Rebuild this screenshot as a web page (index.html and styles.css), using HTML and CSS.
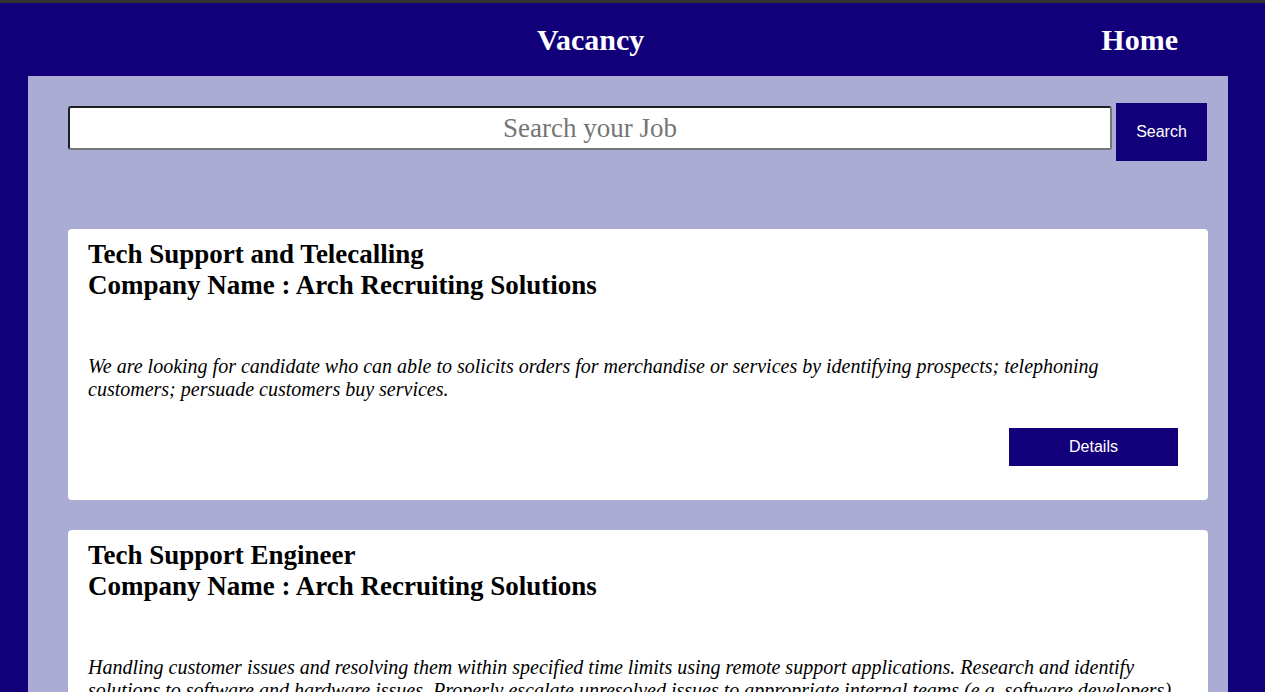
FILE: index.html
```html
<!DOCTYPE html>
<html lang="en">
<head>
<meta charset="utf-8">
<title>Vacancy</title>
<link rel="stylesheet" href="styles.css">
</head>
<body>
<header class="nav">
  <div class="brand">Vacancy</div>
  <a class="home" href="#">Home</a>
</header>
<main class="panel">
  <form class="search">
    <input class="search-input" type="text" placeholder="Search your Job">
    <button class="search-btn" type="button">Search</button>
  </form>
  <section class="jobs">
    <article class="card">
      <h2 class="card-title">Tech Support and Telecalling<br>Company Name : Arch Recruiting Solutions</h2>
      <p class="card-desc">We are looking for candidate who can able to solicits orders for merchandise or services by identifying prospects; telephoning customers; persuade customers buy services.</p>
      <div class="card-actions"><button class="details-btn" type="button">Details</button></div>
    </article>
    <article class="card">
      <h2 class="card-title">Tech Support Engineer<br>Company Name : Arch Recruiting Solutions</h2>
      <p class="card-desc">Handling customer issues and resolving them within specified time limits using remote support applications. Research and identify solutions to software and hardware issues. Properly escalate unresolved issues to appropriate internal teams (e.g. software developers).</p>
      <div class="card-actions"><button class="details-btn" type="button">Details</button></div>
    </article>
  </section>
</main>
</body>
</html>
```
FILE: styles.css
```css
html, body {
  margin: 0;
  padding: 0;
}
body {
  background: #12007a;
  border-top: 3px solid #333333;
  font-family: "Liberation Serif", "Times New Roman", serif;
  color: #000;
}
.nav {
  height: 73px;
  display: flex;
  align-items: center;
  padding: 0 87px 0 537px;
  color: #fff;
  font-weight: bold;
  font-size: 30px;
}
.brand {
  flex: 1;
}
.home {
  color: #fff;
  text-decoration: none;
}
.panel {
  margin-left: 28px;
  width: 1200px;
  box-sizing: border-box;
  background: #abacd3;
  padding: 27px 20px 40px 40px;
  min-height: 700px;
}
.search {
  display: flex;
  align-items: flex-start;
  gap: 4px;
  width: 1139px;
  margin: 0;
}
.search-input {
  flex: 1;
  height: 44px;
  margin-top: 3px;
  box-sizing: border-box;
  border-style: solid;
  border-width: 2px;
  border-color: #1f1f1f #767676 #767676 #1f1f1f;
  border-radius: 3px;
  background: #fff;
  font-family: "Liberation Serif", "Times New Roman", serif;
  font-size: 27px;
  text-align: center;
  padding: 0 8px;
}
.search-input::placeholder {
  color: #757575;
}
.search-btn {
  width: 91px;
  height: 58px;
  border: none;
  background: #12007a;
  color: #fff;
  font-family: "Liberation Sans", Arial, sans-serif;
  font-size: 16px;
  padding: 0;
}
.jobs {
  display: flex;
  flex-direction: column;
  gap: 30px;
  margin-top: 68px;
  width: 1140px;
}
.card {
  background: #fff;
  border-radius: 4px;
  padding: 10px 30px 34px 20px;
}
.card-title {
  margin: 0;
  font-size: 27px;
  line-height: 31px;
  font-weight: bold;
}
.card-desc {
  margin: 54px 0 0;
  font-style: italic;
  font-size: 20px;
  line-height: 23px;
}
.card-actions {
  display: flex;
  justify-content: flex-end;
  margin-top: 27px;
}
.details-btn {
  width: 169px;
  height: 38px;
  border: none;
  background: #12007a;
  color: #fff;
  font-family: "Liberation Sans", Arial, sans-serif;
  font-size: 16px;
  padding: 0;
}
```
